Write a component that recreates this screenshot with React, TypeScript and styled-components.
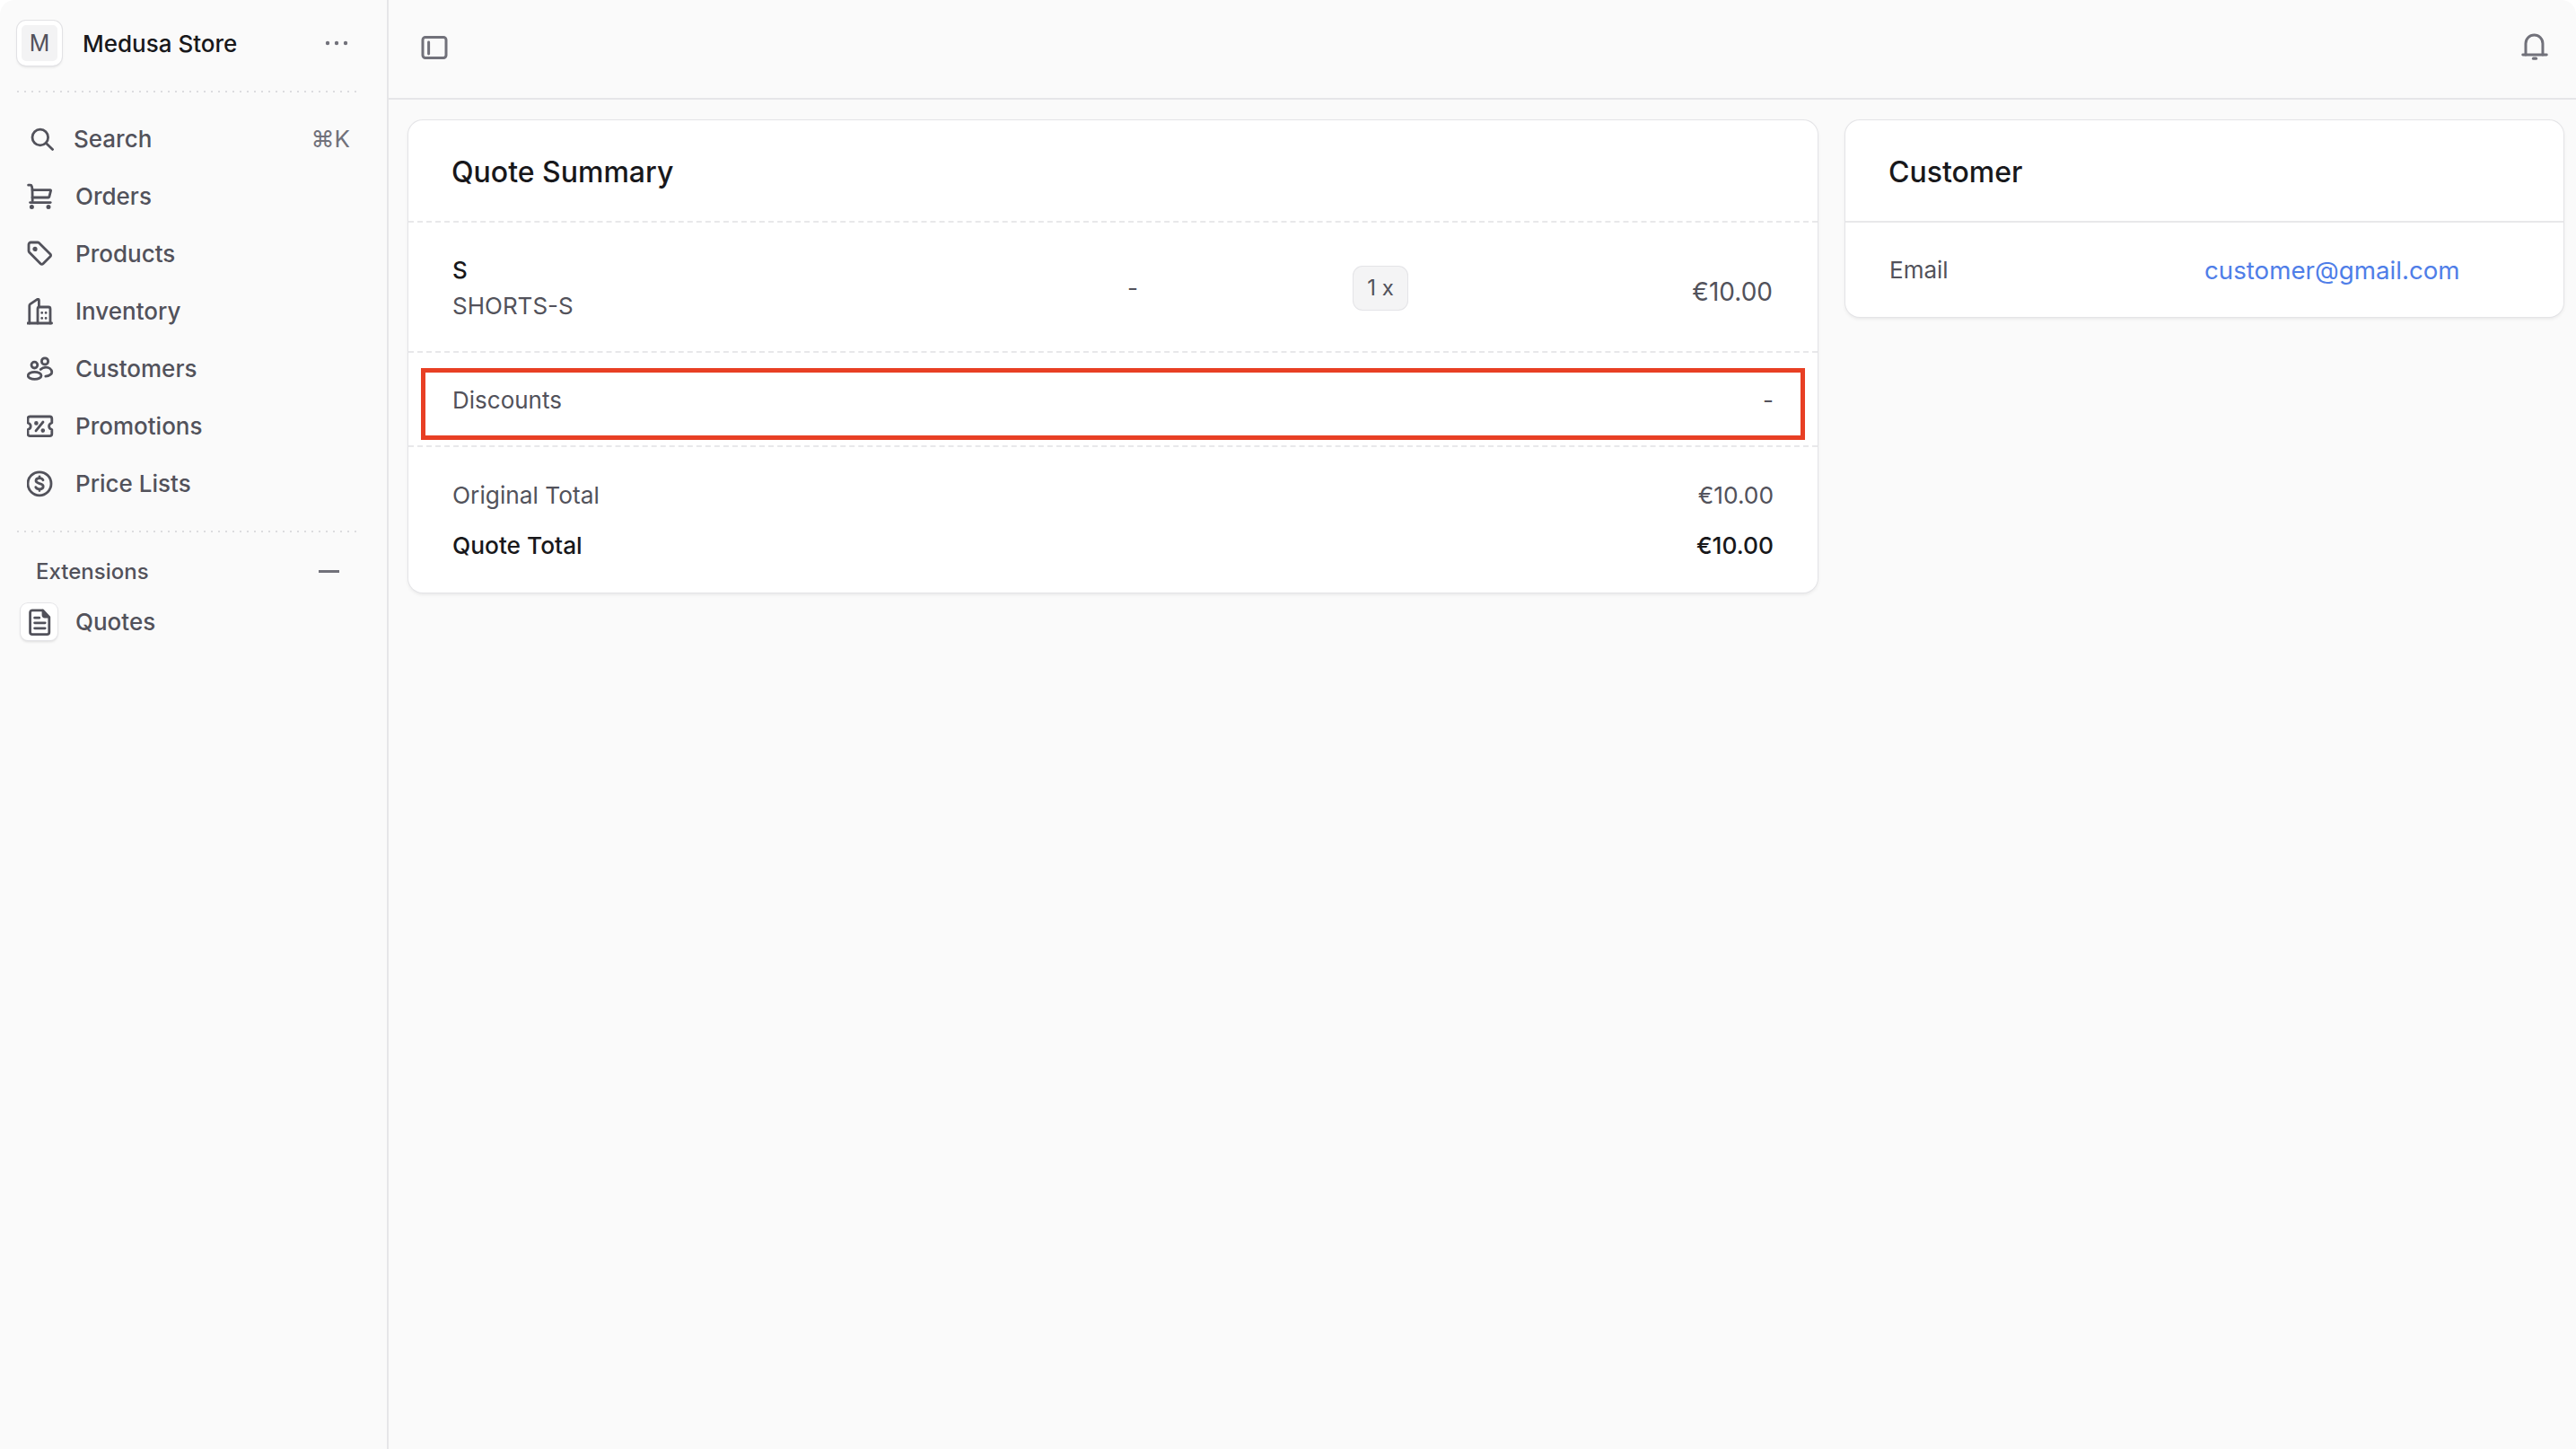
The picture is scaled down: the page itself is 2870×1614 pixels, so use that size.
import React from 'react';
import styled, { createGlobalStyle } from 'styled-components';

const GlobalStyle = createGlobalStyle`
  html, body { margin: 0; padding: 0; background: #fff; }
  body { font-family: Inter, "Liberation Sans", sans-serif; -webkit-font-smoothing: antialiased; }
  * { box-sizing: border-box; }
`;

const Shell = styled('div')`
  background: #fafafa;
  border-radius: 16px 16px 0 0;
  display: grid;
  grid-template-columns: 433px 1fr;
  height: 1614px;
  overflow: hidden;
  width: 2870px;
`;

const Sidebar = styled('aside')`
  border-right: 2px solid #e6e6e8;
  display: flex;
  flex-direction: column;
`;

const StoreRow = styled('div')`
  align-items: center;
  display: flex;
  height: 101px;
  padding: 0 43px 5px 19px;
`;

const Avatar = styled('div')`
  align-items: center;
  background: #f3f3f4;
  border: 5px solid #fff;
  border-radius: 10px;
  box-shadow: 0 0 0 1px #e2e2e5, 0 2px 3px rgba(0, 0, 0, 0.1);
  color: #52525b;
  display: flex;
  font-size: 25px;
  height: 50px;
  justify-content: center;
  width: 50px;
`;

const StoreName = styled('span')`
  color: #18181b;
  flex: 1;
  font-size: 26px;
  font-weight: 500;
  margin-left: 23px;
`;

const Divider = styled('div')`
  background-image: radial-gradient(circle, #dcdcdf 1px, transparent 1.2px);
  background-size: 8px 2px;
  flex: none;
  height: 2px;
  margin: 0 28px 0 16px;
`;

const NavList = styled('nav')`
  display: flex;
  flex-direction: column;
  padding: 20px 0;
`;

const NavRow = styled('div')`
  align-items: center;
  color: #52525b;
  display: flex;
  font-size: 26px;
  font-weight: 500;
  height: 64px;
  padding: 0 41px 0 30px;
`;

const NavIcon = styled('svg')`
  fill: none;
  flex: none;
  height: 30px;
  stroke: #52525b;
  stroke-linecap: round;
  stroke-linejoin: round;
  stroke-width: 1.4;
  width: 30px;
`;

const NavLabel = styled('span')<{ $tight?: boolean }>`
  flex: 1;
  margin-bottom: 2px;
  margin-left: ${props => (props.$tight ? '22px' : '24px')};
`;

const Shortcut = styled('span')`
  color: #71717a;
  font-size: 26px;
  font-weight: 400;
  margin-bottom: 2px;
`;

const ExtensionsHeader = styled('div')`
  align-items: center;
  color: #52525b;
  display: flex;
  font-size: 24px;
  font-weight: 500;
  height: 46px;
  justify-content: space-between;
  margin-bottom: 2px;
  margin-top: 20px;
  padding: 0 53px 0 40px;
`;

const Minus = styled('span')`
  background: #71717a;
  height: 3px;
  width: 23px;
`;

const QuotesRow = styled('div')`
  align-items: center;
  color: #52525b;
  display: flex;
  font-size: 26px;
  font-weight: 500;
  margin-top: 11px;
  padding-left: 23px;
`;

const IconTile = styled('div')`
  align-items: center;
  background: #fff;
  border-radius: 8px;
  box-shadow: 0 0 0 1px #e4e4e7, 0 2px 3px rgba(0, 0, 0, 0.12);
  display: flex;
  height: 41px;
  justify-content: center;
  margin-right: 20px;
  width: 41px;
`;

const Main = styled('main')`
  display: flex;
  flex-direction: column;
  min-width: 0;
`;

const TopBar = styled('header')`
  align-items: center;
  border-bottom: 2px solid #e6e6e8;
  display: flex;
  flex: none;
  height: 111px;
  justify-content: space-between;
  padding: 0 30px 4px 35px;
`;

const TopIcon = styled('svg')`
  fill: none;
  height: 32px;
  stroke: #71717a;
  stroke-linecap: round;
  stroke-linejoin: round;
  stroke-width: 1.4;
  width: 32px;
`;

const Content = styled('div')`
  align-items: start;
  display: grid;
  gap: 31px;
  grid-template-columns: 1570px 800px;
  padding: 23px 14px 0 22px;
`;

const Card = styled('section')`
  background: #fff;
  border-radius: 16px;
  box-shadow: 0 0 0 1px #e4e4e7, 0 2px 4px rgba(0, 0, 0, 0.09);
`;

const CardHeader = styled('div')<{ $dashed?: boolean }>`
  align-items: center;
  border-bottom: 2px ${props => (props.$dashed ? 'dashed' : 'solid')} #e8e8ea;
  color: #18181b;
  display: flex;
  font-size: 32px;
  font-weight: 500;
  height: 114px;
  padding: 2px 48px 0;
`;

const ItemRow = styled('div')`
  align-items: center;
  border-bottom: 2px dashed #e8e8ea;
  display: grid;
  grid-template-columns: 752px 251px 1fr auto;
  height: 145px;
  padding: 2px 50px 0 49px;
`;

const ItemInfo = styled('div')`
  display: flex;
  flex-direction: column;
  font-size: 26px;
  gap: 10px;
  line-height: 30px;
`;

const ItemName = styled('span')`
  color: #18181b;
  font-weight: 500;
`;

const ItemSku = styled('span')`
  color: #52525b;
`;

const ItemDash = styled('span')`
  color: #52525b;
  font-size: 26px;
`;

const QtyBadge = styled('span')`
  align-items: center;
  background: #f4f4f5;
  border-radius: 10px;
  box-shadow: 0 0 0 1px #e4e4e7;
  color: #52525b;
  display: flex;
  font-size: 24px;
  height: 48px;
  justify-content: center;
  margin-left: 1px;
  width: 60px;
`;

const ItemPrice = styled('span')`
  color: #52525b;
  font-size: 28px;
  margin-top: 8px;
`;

const DiscountRow = styled('div')`
  align-items: center;
  border-bottom: 2px dashed #e8e8ea;
  color: #52525b;
  display: flex;
  font-size: 26px;
  height: 105px;
  justify-content: space-between;
  padding: 2px 49px 0;
  position: relative;
`;

/* annotation drawn on top of the screenshot */
const Highlight = styled('div')`
  border: 5px solid #e83f24;
  bottom: 6px;
  left: 14px;
  position: absolute;
  right: 14px;
  top: 17px;
`;

const Totals = styled('div')`
  display: flex;
  flex-direction: column;
  gap: 26px;
  height: 162px;
  padding: 39px 49px 0;
`;

const TotalRow = styled('div')<{ $strong?: boolean }>`
  color: ${props => (props.$strong ? '#18181b' : '#52525b')};
  display: flex;
  font-size: 26.3px;
  font-weight: ${props => (props.$strong ? 500 : 400)};
  justify-content: space-between;
  line-height: 30px;
`;

const EmailRow = styled('div')`
  align-items: center;
  color: #52525b;
  display: grid;
  font-size: 26px;
  grid-template-columns: 1fr 1fr;
  height: 105px;
  padding: 0 49px;
`;

const EmailLink = styled('a')`
  color: #4f7ee8;
  font-size: 27.7px;
`;

const navItems = [
  {
    label: 'Orders',
    icon: (
      <>
        <path d="M.8 1.1h1.100c.4 0 .7.3.8.7l.3 1.500.1 6.600" />
        <path d="M3 3.800h10c.2 0 .4.2.3.4l-.9 3.500c-.1.2-.2.3-.4.3H3" />
        <path d="M1.800 10.800h11.300" />
        <circle cx="2.700" cy="13.300" r=".55" fill="#52525b" />
        <circle cx="12" cy="13.300" r=".55" fill="#52525b" />
      </>
    )
  },
  {
    label: 'Products',
    icon: (
      <>
        <path d="M1 2.200v3.600c0 .3.1.5.3.7l6.300 6.400c.4.4 1 .4 1.400 0l4-4c.4-.4.4-1 0-1.400L6.700 1.300C6.500 1.100 6.200 1 5.900 1H2.200c-.7 0-1.200.5-1.200 1.200z" />
        <circle cx="4.500" cy="4.700" r=".6" fill="#52525b" />
      </>
    )
  },
  {
    label: 'Inventory',
    icon: (
      <>
        <path d="M.4 14h13.400" />
        <path d="M1.400 14V4.200c0-.4.2-.7.5-.9l3.900-2.600c.4-.2.900 0 .900.500V4.800" />
        <path d="M6 14V6c0-.6.4-1 1-1h5c.6 0 1 .4 1 1v8" />
        <path d="M8.300 8.200h.1M10.500 8.200h.1M8.300 11.200h.1M10.500 11.200h.1" strokeWidth="1.300" />
      </>
    )
  },
  {
    label: 'Customers',
    icon: (
      <>
        <circle cx="10" cy="3.200" r="1.800" />
        <circle cx="4.200" cy="5.300" r="1.700" />
        <path d="M7.600 7.800c.8-.8 1.900-1.200 3-1.200 1.700 0 3.100 1.100 3.300 2.600.1 1-1.300 2.200-3.500 2.400" />
        <ellipse cx="4.300" cy="11.200" rx="3.700" ry="2" />
      </>
    )
  },
  {
    label: 'Promotions',
    icon: (
      <>
        <path d="M1.700 2h11c.7 0 1.200.5 1.200 1.200v2.300c-1 .3-1.600 1-1.600 1.900s.6 1.600 1.600 1.900v2.300c0 .7-.5 1.200-1.200 1.200h-11C1 12.800.5 12.300.5 11.600V9.300c1-.3 1.600-1 1.600-1.900s-.6-1.600-1.600-1.900V3.200C.5 2.500 1 2 1.700 2z" />
        <path d="M5 9.900l4-4.900" />
        <circle cx="5.200" cy="5.700" r=".45" fill="#52525b" />
        <circle cx="8.900" cy="9.800" r=".45" fill="#52525b" />
      </>
    )
  },
  {
    label: 'Price Lists',
    icon: (
      <>
        <circle cx="7" cy="7.400" r="6.500" />
        <path d="M9 5.400c-.3-.7-1-1.100-2-1.100-1.200 0-2 .6-2 1.500 0 2 4.100 1 4.100 3.100 0 .9-.9 1.500-2.100 1.500-1 0-1.800-.4-2.100-1.100M7 3.400v.9M7 10.400v.9" />
      </>
    )
  }
];

export default function App() {
  return (
    <>
      <GlobalStyle />
      <Shell>
        <Sidebar>
          <StoreRow>
            <Avatar>M</Avatar>
            <StoreName>Medusa Store</StoreName>
            <svg width="26" height="6" viewBox="0 0 26 6" fill="#71717a">
              <circle cx="3" cy="3" r="2.2" />
              <circle cx="13" cy="3" r="2.2" />
              <circle cx="23" cy="3" r="2.2" />
            </svg>
          </StoreRow>
          <Divider />
          <NavList>
            <NavRow>
              <NavIcon viewBox="0 0 15 15">
                <circle cx="7.400" cy="6.500" r="4.400" />
                <path d="M14.300 13.200l-3.600-3.400" />
              </NavIcon>
              <NavLabel $tight>Search</NavLabel>
              <Shortcut>⌘K</Shortcut>
            </NavRow>
            {navItems.map(item => (
              <NavRow key={item.label}>
                <NavIcon viewBox="0 0 15 15">{item.icon}</NavIcon>
                <NavLabel>{item.label}</NavLabel>
              </NavRow>
            ))}
          </NavList>
          <Divider />
          <ExtensionsHeader>
            Extensions
            <Minus />
          </ExtensionsHeader>
          <QuotesRow>
            <IconTile>
              <NavIcon viewBox="0 0 15 15">
                <path d="M3.500.9h5.800l3.600 3.800v8.400c0 .7-.5 1.200-1.200 1.200H3.500c-.7 0-1.200-.5-1.200-1.200V2.100C2.300 1.400 2.800.9 3.500.9z" />
                <path d="M9.300.9v2.600c0 .7.5 1.200 1.200 1.200h2.400" fill="#52525b" strokeWidth="1" />
                <path d="M4.800 5.100h2.600M4.800 7.900h5.800M4.800 10.900h5.800" />
              </NavIcon>
            </IconTile>
            Quotes
          </QuotesRow>
        </Sidebar>
        <Main>
          <TopBar>
            <TopIcon viewBox="0 0 15 15">
              <rect x="1.400" y="2.100" width="12.200" height="10.800" rx="1.400" />
              <path d="M4.500 4.700v6.100" />
            </TopIcon>
            <TopIcon viewBox="0 0 15 15">
              <path d="M2.800 11.300V5.400a4.450 4.450 0 0 1 8.900 0v5.900" />
              <path d="M1.300 11.300h12.400" />
              <path d="M6.800 13.200h1.400" strokeWidth="1.500" />
            </TopIcon>
          </TopBar>
          <Content>
            <Card>
              <CardHeader $dashed>Quote Summary</CardHeader>
              <ItemRow>
                <ItemInfo>
                  <ItemName>S</ItemName>
                  <ItemSku>SHORTS-S</ItemSku>
                </ItemInfo>
                <ItemDash>-</ItemDash>
                <div>
                  <QtyBadge>1 x</QtyBadge>
                </div>
                <ItemPrice>€10.00</ItemPrice>
              </ItemRow>
              <DiscountRow>
                Discounts
                <span>-</span>
                <Highlight />
              </DiscountRow>
              <Totals>
                <TotalRow>
                  Original Total
                  <span>€10.00</span>
                </TotalRow>
                <TotalRow $strong>
                  Quote Total
                  <span>€10.00</span>
                </TotalRow>
              </Totals>
            </Card>
            <Card>
              <CardHeader>Customer</CardHeader>
              <EmailRow>
                Email
                <EmailLink>customer@gmail.com</EmailLink>
              </EmailRow>
            </Card>
          </Content>
        </Main>
      </Shell>
    </>
  );
}
